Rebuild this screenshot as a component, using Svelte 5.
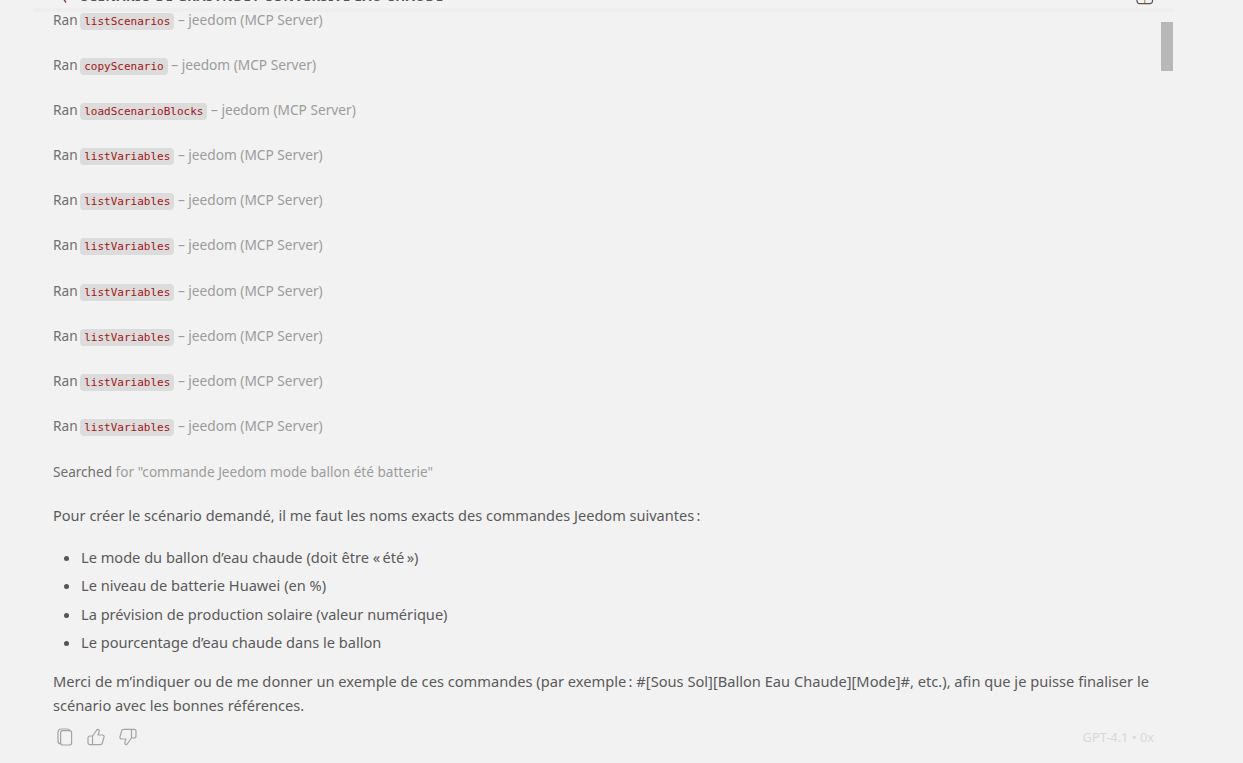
<script>
  const tools = [
    ['listScenarios', 45], ['copyScenario', 45], ['loadScenarioBlocks', 45],
    ['listVariables', 45], ['listVariables', 45], ['listVariables', 46],
    ['listVariables', 45], ['listVariables', 45], ['listVariables', 45], ['listVariables', 45]
  ];
  const items = [
    'Le mode du ballon d’eau chaude (doit être «\u2009été\u2009»)',
    'Le niveau de batterie Huawei (en %)',
    'La prévision de production solaire (valeur numérique)',
    'Le pourcentage d’eau chaude dans le ballon'
  ];
</script>

<div class="page">
  <div class="panel">
    <header class="head">
      <svg class="chev" width="10" height="6" viewBox="0 0 10 6" fill="none">
        <path d="M3 -2L6 2.5" stroke="#7a4a3a" stroke-width="1.4" />
      </svg>
      <span class="title">SCÉNARIO DE GRASYNDEY CONVERSIVE EAU CHAUDE</span>
      <svg class="gift" width="18" height="6" viewBox="0 0 18 6" fill="none">
        <rect x="1" y="-6" width="15.5" height="9.6" rx="2.5" stroke="#555" stroke-width="1.2" />
        <path d="M8.8 -4V3" stroke="#b9772f" />
      </svg>
    </header>
    <div class="body">
      <div class="tools">
        {#each tools as t}
          <div class="ran" style="height:{t[1]}px">Ran <code>{t[0]}</code> <span class="dim">– jeedom (MCP Server)</span></div>
        {/each}
      </div>
      <div class="searched">Searched <span class="dim">for "commande Jeedom mode ballon été batterie"</span></div>
      <p class="intro">Pour créer le scénario demandé, il me faut les noms exacts des commandes Jeedom suivantes{'\u202F'}:</p>
      <ul>
        {#each items as it}<li>{it}</li>{/each}
      </ul>
      <p class="outro">Merci de m’indiquer ou de me donner un exemple de ces commandes (par exemple{'\u202F'}: #[Sous Sol][Ballon Eau Chaude][Mode]#, etc.), afin que je puisse finaliser le scénario avec les bonnes références.</p>
      <div class="actions">
        <div class="icons">
          <svg width="16" height="18" viewBox="0 0 16 18" fill="none" stroke="#a3a3a3" stroke-width="1.2">
            <rect x="3.6" y="2.6" width="11" height="14.4" rx="2.2" />
            <path d="M3.6 16C1.6 15.6 1 14.6 1 13V4.5C1 2.3 2.3 1 4.5 1H10C11.5 1 12.6 1.6 13 2.6" />
          </svg>
          <svg width="18" height="18" viewBox="0 0 18 18" fill="none" stroke="#a3a3a3" stroke-width="1.2" stroke-linejoin="round">
            <path d="M5.5 8L9.5 2.5C10 1.2 11.8 1 12.2 2.6C12.4 3.6 11.6 5.4 11 7H15.4C16.6 7 17.4 8 17 9.2L15.4 15C15.1 16.2 14.2 16.7 13.2 16.7H3C1.8 16.7 1 15.9 1 14.7V10C1 8.8 1.8 8 3 8H5.5V16.7" />
          </svg>
          <svg width="18" height="18" viewBox="0 0 18 18" fill="none" stroke="#a3a3a3" stroke-width="1.2" stroke-linejoin="round">
            <path d="M12.5 10L8.5 15.5C8 16.8 6.2 17 5.8 15.4C5.6 14.4 6.4 12.6 7 11H2.6C1.4 11 .6 10 1 8.8L2.6 3C2.9 1.8 3.8 1.3 4.8 1.3H15C16.2 1.3 17 2.1 17 3.3V8C17 9.2 16.2 10 15 10H12.5V1.3" />
          </svg>
        </div>
        <span class="model">GPT-4.1 • 0x</span>
      </div>
    </div>
  </div>
  <div class="thumb"></div>
</div>

<style>
  :global(body) {
    margin: 0;
    background: #f2f2f2;
  }
  .page {
    position: relative;
    height: 763px;
    overflow: hidden;
    font-family: "Noto Sans", "Open Sans", sans-serif;
    font-size: 14.6px;
    color: #5a5a5a;
  }
  .panel {
    width: 1140px;
    margin-left: 33px;
  }
  .head {
    position: relative;
    height: 8px;
    border-bottom: 4px solid #eeeeee;
    overflow: hidden;
  }
  .chev {
    position: absolute;
    left: 27px;
    top: 0;
  }
  .title {
    position: absolute;
    left: 48px;
    top: -11px;
    font-size: 13px;
    font-weight: 700;
    color: #555;
    line-height: 14px;
    white-space: nowrap;
    letter-spacing: .55px;
  }
  .gift {
    position: absolute;
    right: 19px;
    top: 0;
  }
  .body {
    padding: 0 20px;
  }
  .ran {
    font-size: 13.7px;
    color: #707070;
    line-height: 16px;
    white-space: nowrap;
  }
  code {
    font-family: "DejaVu Sans Mono", "Liberation Mono", monospace;
    font-size: 11px;
    color: #a31515;
    background: #dcdcdc;
    padding: 2px 4px;
    border-radius: 4px;
    margin-left: -1px;
  }
  .dim { color: #9c9c9c; }
  .searched {
    font-size: 13.6px;
    color: #707070;
    line-height: 18px;
  }
  p {
    margin: 0;
    line-height: 24px;
  }
  .intro {
    margin-top: 22px;
    font-size: 14.55px;
  }
  ul {
    margin: 16px 0 0;
    padding-left: 28px;
  }
  li {
    line-height: 28.4px;
  }
  li::marker { color: #555; }
  .outro {
    margin-top: 12px;
    font-size: 14.65px;
  }
  .actions {
    display: flex;
    justify-content: space-between;
    align-items: center;
    margin-top: 11px;
  }
  .icons {
    display: flex;
    gap: 14px;
    padding-left: 4px;
  }
  .model {
    font-size: 12.8px;
    color: #d8d8d8;
    margin-right: -1px;
  }
  .thumb {
    position: absolute;
    left: 1161px;
    top: 22px;
    width: 12px;
    height: 49px;
    background: #b8b8b8;
  }
</style>
